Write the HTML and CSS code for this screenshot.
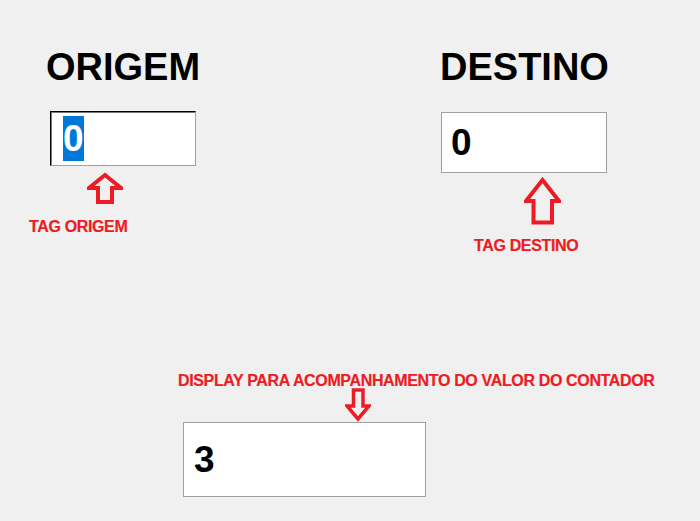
FILE: index.html
```html
<!DOCTYPE html>
<html lang="pt-BR">
  <head>
    <meta charset="UTF-8" />
    <meta name="viewport" content="width=device-width, initial-scale=1.0" />
    <title>Contador</title>
    <link rel="stylesheet" href="styles.css">
  </head>
  <body>
    <div class="top-row">
      <div class="panel origem">
        <h2>ORIGEM</h2>
        <div class="box box-origem"><span class="selected">0</span></div>
        <svg class="arrow arrow-origem" width="36" height="33" viewBox="0 0 36 33">
          <path d="M18 3 L34 16 H25 V30 H11 V16 H2 Z" />
        </svg>
        <p class="note note-origem">TAG ORIGEM</p>
      </div>

      <div class="panel destino">
        <h2>DESTINO</h2>
        <div class="box box-destino">0</div>
        <svg class="arrow arrow-destino" width="37" height="48" viewBox="0 0 37 48">
          <path d="M18.5 3 L35 24 H28 V45.5 H9.5 V24 H2 Z" />
        </svg>
        <p class="note note-destino">TAG DESTINO</p>
      </div>
    </div>

    <div class="bottom">
      <p class="note">DISPLAY PARA ACOMPANHAMENTO DO VALOR DO CONTADOR</p>
      <svg class="arrow arrow-down" width="26" height="34" viewBox="0 0 26 34">
        <path d="M8.5 2 H18 V18 H24 L13 31 L2 18 H8.5 Z" />
      </svg>
      <div class="box box-display">3</div>
    </div>
  </body>
</html>
```

FILE: styles.css
```css
body {
  margin: 0;
  background: #f0f0f0;
  font-family: "Liberation Sans", Arial, sans-serif;
}

/* Linha de cima */
.top-row {
  display: flex;
  padding-left: 46px;
  padding-top: 49px;
}
.origem {
  width: 394px;
}
.panel h2 {
  margin: 0;
  font-size: 38px;
  line-height: 37px;
  font-weight: bold;
  color: #000;
}

/* Caixas de texto */
.box {
  box-sizing: border-box;
  display: flex;
  align-items: center;
  background: #fff;
  border: 1px solid #a0a0a0;
  font-size: 37px;
  font-weight: bold;
  color: #000;
}
.box-origem {
  width: 146px;
  height: 55px;
  margin: 25px 0 0 4px;
  padding-left: 12px;
  border-color: #000 #a0a0a0 #a0a0a0 #000;
  box-shadow: inset 1px 1px 0 #7a7a7a;
}
.box-origem .selected {
  background: #0078d7;
  color: #fff;
  line-height: 45px;
}
.box-destino {
  width: 166px;
  height: 61px;
  margin: 26px 0 0 1px;
  padding-left: 9px;
}
.box-display {
  width: 243px;
  height: 75px;
  margin-left: 5px;
  padding-left: 10px;
}

/* Setas e notas */
.arrow {
  display: block;
}
.arrow path {
  fill: none;
  stroke: #ed1c24;
  stroke-width: 4;
}
.arrow-origem {
  margin: 6px 0 0 41px;
}
.arrow-destino {
  margin: 4px 0 0 84px;
}
.arrow-down {
  margin: -2px 0 0 167px;
}
.arrow-down path {
  stroke-width: 3.5;
}
.note {
  margin: 0;
  font-size: 16px;
  line-height: 18px;
  letter-spacing: -0.35px;
  font-weight: bold;
  color: #ed1c24;
  -webkit-text-stroke: 0.2px #ed1c24;
}
.note-origem {
  margin: 13px 0 0 -17px;
}
.note-destino {
  margin: 12px 0 0 34px;
}

/* Display */
.bottom {
  margin: 117px 0 0 178px;
}
```
